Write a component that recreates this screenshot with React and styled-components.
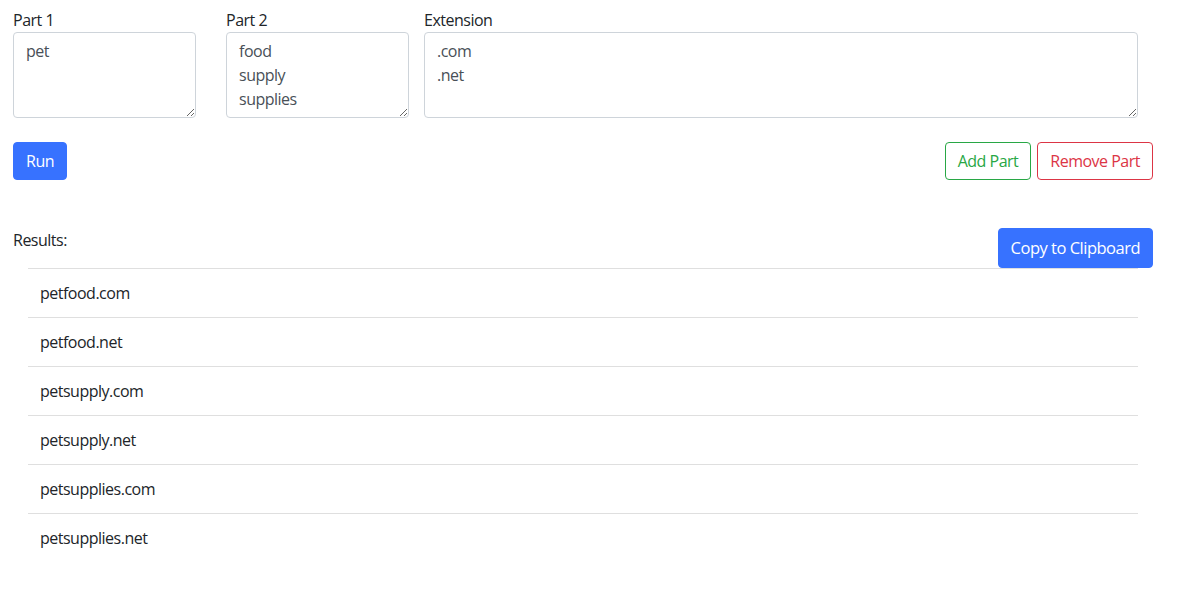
import React, { useState } from 'react';
import styled, { createGlobalStyle } from 'styled-components';

const GlobalStyle = createGlobalStyle`
  html, body {
    margin: 0;
    background: #fff;
  }
  body {
    font-family: "Open Sans", "Noto Sans", Arial, sans-serif;
    font-size: 16px;
    line-height: 1.5;
    letter-spacing: -0.5px;
    color: #212529;
  }
  * {
    box-sizing: border-box;
  }
`;

const Page = styled.div`
  width: 1140px;
  padding: 8px 0 0 13px;
  box-sizing: content-box;
`;

const FieldRow = styled.div`
  display: flex;
  align-items: flex-start;
`;

const Field = styled.div`
  display: flex;
  flex-direction: column;
  width: ${p => p.$width}px;
  margin-right: ${p => p.$gap || 0}px;
`;

const Label = styled.label`
  font-size: 16px;
  line-height: 24px;
`;

const TextArea = styled.textarea`
  height: 86px;
  width: 100%;
  padding: 6px 12px;
  font-family: inherit;
  font-size: 16px;
  line-height: 24px;
  letter-spacing: -0.5px;
  color: #495057;
  border: 1px solid #ced4da;
  border-radius: 4px;
  outline: none;
  resize: both;
`;

const ActionRow = styled.div`
  display: flex;
  justify-content: space-between;
  align-items: center;
  margin-top: 24px;
`;

const ButtonGroup = styled.div`
  display: flex;
  gap: 6px;
`;

const Button = styled.button`
  font-family: inherit;
  font-size: ${p => p.$size || 16}px;
  line-height: ${p => p.$line || 24}px;
  letter-spacing: -0.5px;
  padding: 6px 12px;
  border-radius: 4px;
  cursor: pointer;
  border: 1px solid ${p => p.$color};
  background: ${p => (p.$outline ? '#fff' : p.$color)};
  color: ${p => (p.$outline ? p.$color : '#fff')};
`;

const ResultsHeader = styled.div`
  display: flex;
  justify-content: space-between;
  align-items: flex-start;
  margin-top: 48px;
`;

const ResultsLabel = styled.span`
  font-size: 16px;
  line-height: 24px;
`;

const List = styled.ul`
  list-style: none;
  margin: 0 15px;
  padding: 0;
`;

const Item = styled.li`
  padding: 12px 12px;
  border-top: 1px solid #dfdfdf;
  line-height: 24px;
`;

export default function App() {
  const [parts] = useState([
    { label: 'Part 1', width: 183, gap: 30, value: 'pet' },
    { label: 'Part 2', width: 183, gap: 15, value: 'food\nsupply\nsupplies' },
    { label: 'Extension', width: 714, gap: 0, value: '.com\n.net' },
  ]);

  const results = [
    'petfood.com',
    'petfood.net',
    'petsupply.com',
    'petsupply.net',
    'petsupplies.com',
    'petsupplies.net',
  ];

  return (
    <>
      <GlobalStyle />
      <Page>
        <FieldRow>
          {parts.map(p => (
            <Field key={p.label} $width={p.width} $gap={p.gap}>
              <Label>{p.label}</Label>
              <TextArea defaultValue={p.value} />
            </Field>
          ))}
        </FieldRow>

        <ActionRow>
          <Button $color="#3772ff">Run</Button>
          <ButtonGroup>
            <Button $outline $color="#28a745">Add Part</Button>
            <Button $outline $color="#dc3545">Remove Part</Button>
          </ButtonGroup>
        </ActionRow>

        <ResultsHeader>
          <ResultsLabel>Results:</ResultsLabel>
          <Button $color="#3772ff" $size={16.5} $line={26}>Copy to Clipboard</Button>
        </ResultsHeader>

        <List>
          {results.map(r => (
            <Item key={r}>{r}</Item>
          ))}
        </List>
      </Page>
    </>
  );
}
